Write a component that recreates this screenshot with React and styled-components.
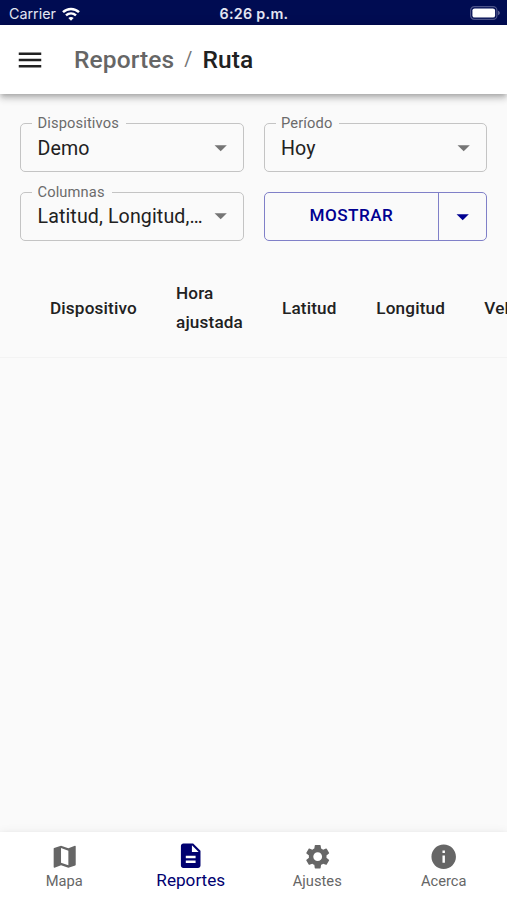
import React from "react";
import styled, { createGlobalStyle } from "styled-components";
import {
  MdArrowDropDown,
  MdDescription,
  MdInfo,
  MdMap,
  MdMenu,
  MdSettings,
} from "react-icons/md";

const GlobalStyle = createGlobalStyle`
  * {
    box-sizing: border-box;
  }
  body {
    margin: 0;
    overflow: hidden;
    background: #fafafa;
    color: #212121;
    font-family: Roboto, "Noto Sans", sans-serif;
  }
`;

// Full height column: status bar, app bar, content, bottom navigation
const Page = styled.div`
  height: 100vh;
  display: flex;
  flex-direction: column;
  overflow: hidden;
`;

const StatusBar = styled.div`
  flex: none;
  height: 25px;
  padding: 2px 7px 0 9px;
  display: grid;
  grid-template-columns: 1fr auto 1fr;
  align-items: center;
  background: #000c52;
  color: #e4e6f2;
  font-family: Inter, sans-serif;
  font-size: 14.3px;
`;
const Carrier = styled.div`
  display: flex;
  align-items: center;
  gap: 6px;
`;
const Clock = styled.div`
  margin-right: 1px;
  font-weight: 600;
  font-size: 14.3px;
  letter-spacing: 0.3px;
`;
const BatterySlot = styled.div`
  display: flex;
  justify-content: flex-end;
  padding-bottom: 1px;
`;

// White bar with the menu button and the breadcrumbs
const AppBar = styled.header`
  flex: none;
  height: 69px;
  padding: 0 15px;
  display: flex;
  align-items: center;
  background: #fff;
  box-shadow:
    0 2px 5px -1px rgba(0, 0, 0, 0.2),
    0 5px 6px 0 rgba(0, 0, 0, 0.14),
    0 1px 12px 0 rgba(0, 0, 0, 0.12);
  z-index: 1;
`;
const MenuButton = styled.button`
  display: flex;
  padding: 0;
  margin-right: 29px;
  border: 0;
  background: none;
  color: #212121;
  font-size: 30px;
`;
const Breadcrumbs = styled.div`
  display: flex;
  align-items: center;
  font-size: 24.5px;
  font-weight: 500;
  letter-spacing: 0.12px;
`;
const Crumb = styled.span`
  color: ${({ $current }) => ($current ? "#212121" : "#666")};
`;
const Separator = styled.span`
  margin: 0 10px;
  color: #757575;
  font-size: 19.6px;
  font-weight: 400;
`;

const Content = styled.main`
  flex: 1;
  min-height: 0;
  overflow: hidden;
`;

// Filters above the table, two per row
const Filters = styled.div`
  display: grid;
  grid-template-columns: 1fr 1fr;
  gap: 19.6px;
  padding: 29px 19.6px 0 20px;
`;
const Field = styled.div`
  position: relative;
  min-width: 0;
  height: 49px;
  padding: 0 8px 0 16.5px;
  display: flex;
  align-items: center;
  border: 1px solid #c4c4c4;
  border-radius: 5px;
`;
const FieldLabel = styled.label`
  position: absolute;
  top: -10px;
  left: 11px;
  padding: 0 7px 0 5.5px;
  background: #fafafa;
  color: #6b6b6b;
  font-size: 14.7px;
  line-height: 18px;
  letter-spacing: 0.12px;
`;
const FieldValue = styled.div`
  flex: 1;
  min-width: 0;
  padding-top: 2px;
  overflow: hidden;
  text-overflow: ellipsis;
  white-space: nowrap;
  font-size: 19.6px;
  line-height: 28px;
  letter-spacing: 0.12px;
`;
const FieldArrow = styled(MdArrowDropDown)`
  flex: none;
  color: #757575;
  font-size: 29.4px;
`;

// Outlined split button
const ButtonGroup = styled.div`
  height: 49px;
  display: flex;
  border: 1px solid #8080c8;
  border-radius: 5px;
`;
const GroupButton = styled.button`
  flex: ${({ $grow }) => ($grow ? "1" : "0 0 47px")};
  padding: 0 0 2px;
  display: flex;
  align-items: center;
  justify-content: center;
  border: 0;
  border-right: ${({ $grow }) => ($grow ? "1px solid #8080c8" : "0")};
  background: none;
  color: #000091;
  font-family: inherit;
  font-size: 17.15px;
  font-weight: 500;
  letter-spacing: 0.45px;
  text-transform: uppercase;

  svg {
    margin-top: 3px;
    font-size: 29.4px;
  }
`;

// Report table, wider than the screen
const Table = styled.table`
  width: 660px;
  margin-top: 19px;
  border-collapse: collapse;
  table-layout: fixed;
`;
const HeadCell = styled.th`
  width: ${({ $width }) => $width}px;
  height: 98px;
  padding: 0 0 0 19.6px;
  border-bottom: 1px solid #f3f3f3;
  text-align: left;
  font-size: 17.15px;
  font-weight: 500;
  line-height: 29.4px;
  letter-spacing: 0.16px;
`;

const BottomNav = styled.nav`
  flex: none;
  height: 68px;
  padding: 0 0 0 1px;
  display: grid;
  grid-template-columns: repeat(4, 1fr);
  background: #fff;
  box-shadow:
    0 4px 5px -2px rgba(0, 0, 0, 0.2),
    0 2px 5px 0 rgba(0, 0, 0, 0.08),
    0 1px 10px 0 rgba(0, 0, 0, 0.08);
  z-index: 1;
`;
const NavItem = styled.a`
  display: flex;
  flex-direction: column;
  align-items: center;
  padding-top: ${({ $active }) => ($active ? 9 : 10)}px;
  color: ${({ $active }) => ($active ? "#000070" : "#666")};

  svg {
    font-size: 29.4px;
  }
`;
const NavLabel = styled.span`
  font-size: ${({ $active }) => ($active ? 17.15 : 14.7)}px;
  line-height: 20px;
`;

const WifiIcon = () => (
  <svg width="18" height="14" viewBox="0 0 18 14" fill="none" stroke="#fff" strokeWidth="2.5">
    <path d="M1 5.1C5.5.8 12.5.8 17 5.1" />
    <path d="M4 8.4c2.9-2.6 7.1-2.6 10 0" />
    <path d="M6.3 10.9c1.6-1.3 3.8-1.3 5.4 0L9 13.7z" fill="#fff" stroke="none" />
  </svg>
);

const BatteryIcon = () => (
  <svg width="30" height="14" viewBox="0 0 30 14">
    <rect x="0.6" y="0.6" width="26.3" height="12.8" rx="3.8" fill="none" stroke="#4d548a" strokeWidth="1.2" />
    <rect x="2.4" y="2.4" width="22.7" height="9.2" rx="2.2" fill="#fff" />
    <path d="M28.2 4.8c2 .7 2 3.7 0 4.4z" fill="#7076a1" />
  </svg>
);

const Select = ({ label, value }) => (
  <Field>
    <FieldLabel>{label}</FieldLabel>
    <FieldValue>{value}</FieldValue>
    <FieldArrow />
  </Field>
);

const columns = [
  { title: "", width: 30.4 },
  { title: "Dispositivo", width: 126 },
  { title: "Hora ajustada", width: 106 },
  { title: "Latitud", width: 94.3 },
  { title: "Longitud", width: 108 },
  { title: "Velocidad" },
];

const navItems = [
  { label: "Mapa", icon: MdMap },
  { label: "Reportes", icon: MdDescription, active: true },
  { label: "Ajustes", icon: MdSettings },
  { label: "Acerca", icon: MdInfo },
];

const App = () => {
  return (
    <Page>
      <GlobalStyle />
      <StatusBar>
        <Carrier>
          Carrier
          <WifiIcon />
        </Carrier>
        <Clock>6:26 p.m.</Clock>
        <BatterySlot>
          <BatteryIcon />
        </BatterySlot>
      </StatusBar>
      <AppBar>
        <MenuButton aria-label="menu">
          <MdMenu />
        </MenuButton>
        <Breadcrumbs>
          <Crumb>Reportes</Crumb>
          <Separator>/</Separator>
          <Crumb $current>Ruta</Crumb>
        </Breadcrumbs>
      </AppBar>
      <Content>
        <Filters>
          <Select label="Dispositivos" value="Demo" />
          <Select label="Período" value="Hoy" />
          <Select label="Columnas" value="Latitud, Longitud, Velocidad" />
          <ButtonGroup>
            <GroupButton $grow>Mostrar</GroupButton>
            <GroupButton aria-label="opciones">
              <MdArrowDropDown />
            </GroupButton>
          </ButtonGroup>
        </Filters>
        <Table>
          <thead>
            <tr>
              {columns.map(({ title, width }) => (
                <HeadCell key={title} $width={width}>
                  {title}
                </HeadCell>
              ))}
            </tr>
          </thead>
        </Table>
      </Content>
      <BottomNav>
        {navItems.map(({ label, icon: Icon, active }) => (
          <NavItem key={label} $active={active}>
            <Icon />
            <NavLabel $active={active}>{label}</NavLabel>
          </NavItem>
        ))}
      </BottomNav>
    </Page>
  );
};

export default App;
